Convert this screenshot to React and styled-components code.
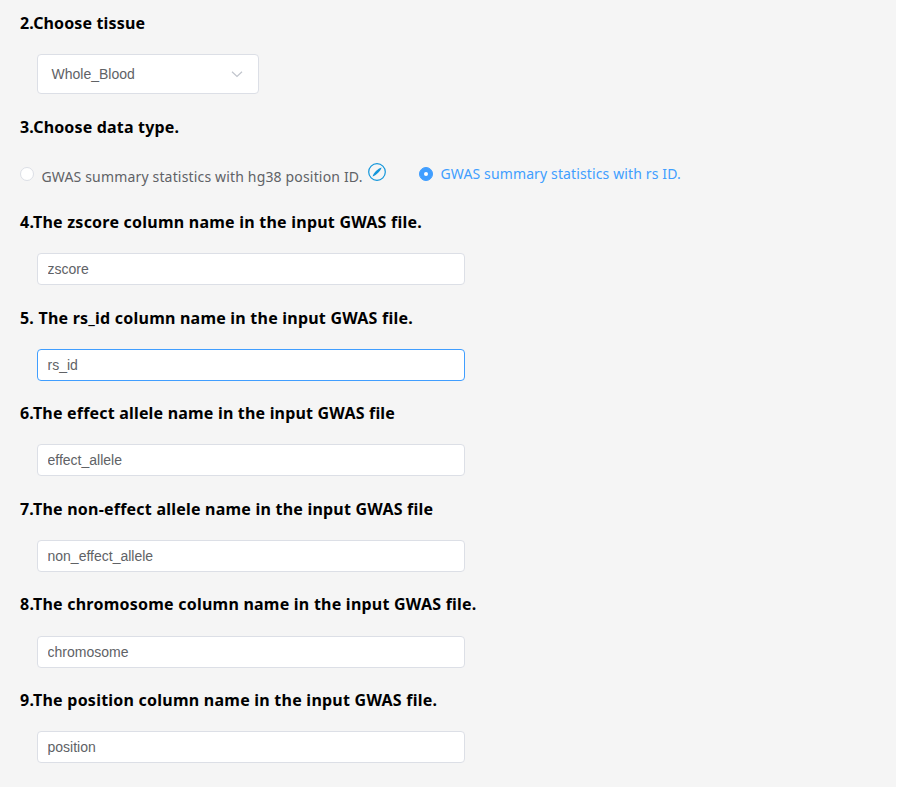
import React from "react";
import styled, { createGlobalStyle } from "styled-components";

const GlobalStyle = createGlobalStyle`
  * { box-sizing: border-box; }
  body { margin: 0; background: #fff; overflow: hidden; }
`;

const Page = styled.main`
  width: 896px;
  height: 787px;
  padding: 12px 20px 0;
  overflow: hidden;
  background: #f5f5f5;
  font-family: "Noto Sans", "Open Sans", sans-serif;
`;

const Section = styled.section`
  display: flex;
  flex-direction: column;
  height: ${(p) => p.$height}px;
`;

const Heading = styled.h3`
  margin: 0 0 ${(p) => p.$gap ?? 20.2}px;
  height: 22px;
  font-size: 16px;
  line-height: 22px;
  font-weight: 700;
  color: #000;
  white-space: nowrap;
  letter-spacing: ${(p) => p.$spacing ?? 0}px;
`;

const Select = styled.button`
  display: flex;
  align-items: center;
  justify-content: space-between;
  width: 222px;
  height: 40px;
  margin-left: 17px;
  padding: 0 14px 0 13.5px;
  border: 1px solid #dcdfe6;
  border-radius: 4px;
  background: #fff;
  color: #606266;
  font: 14px "Liberation Sans", Arial, sans-serif;
`;

const TextInput = styled.input`
  width: 428px;
  height: 32px;
  flex: none;
  margin-left: 17px;
  padding: 0 9.5px;
  border: 1px solid ${(p) => (p.$focused ? "#409eff" : "#dcdfe6")};
  border-radius: 4px;
  outline: none;
  background: #fff;
  color: #606266;
  font: 14px "Liberation Sans", Arial, sans-serif;
`;

const RadioRow = styled.div`
  display: flex;
  align-items: flex-start;
  height: 28px;
`;

const Radio = styled.label`
  display: flex;
  align-items: flex-start;
  color: ${(p) => (p.$checked ? "#409eff" : "#606266")};
`;

const Dot = styled.span`
  flex: none;
  display: flex;
  align-items: center;
  justify-content: center;
  width: 14px;
  height: 14px;
  margin-top: 5px;
  border: 1px solid ${(p) => (p.$checked ? "#409eff" : "#dcdfe6")};
  border-radius: 50%;
  background: ${(p) => (p.$checked ? "#409eff" : "#fff")};

  &::after {
    content: "";
    width: 4px;
    height: 4px;
    border-radius: 50%;
    background: #fff;
  }
`;

const RadioText = styled.span`
  width: ${(p) => p.$width}px;
  margin: ${(p) => p.$top}px 0 0 7.5px;
  font-size: 14px;
  line-height: 20px;
  white-space: nowrap;
  letter-spacing: ${(p) => p.$spacing}px;
`;

const CompassIcon = styled.svg`
  flex: none;
  width: 18px;
  height: 18px;
  margin: 1px 33px 0 0;
`;

const columns = [
  ["4.The zscore column name in the input GWAS file.", "zscore", 0.23],
  ["5. The rs_id column name in the input GWAS file.", "rs_id", 0.22],
  ["6.The effect allele name in the input GWAS file", "effect_allele", 0.19],
  ["7.The non-effect allele name in the input GWAS file", "non_effect_allele", 0.22],
  ["8.The chromosome column name in the input GWAS file.", "chromosome", 0.23],
  ["9.The position column name in the input GWAS file.", "position", 0.235],
];

export default function App() {
  return (
    <>
      <GlobalStyle />
      <Page>
        <Section $height={104}>
          <Heading $gap={20} $spacing={0.14}>2.Choose tissue</Heading>
          <Select type="button">
            Whole_Blood
            <svg width="14" height="14" viewBox="0 0 14 14" fill="none">
              <path d="M2 4.8 7 9.4l5-4.6" stroke="#c0c4cc" strokeWidth="1.2" />
            </svg>
          </Select>
        </Section>
        <Section $height={95}>
          <Heading $gap={24} $spacing={0.17}>3.Choose data type.</Heading>
          <RadioRow>
            <Radio>
              <Dot />
              <RadioText $top={5} $width={326.5} $spacing={0.165}>
                GWAS summary statistics with hg38 position ID.
              </RadioText>
              <CompassIcon viewBox="0 0 18 18">
                <circle cx="9" cy="9" r="8.3" fill="none" stroke="#1296db" strokeWidth="1.2" />
                <path
                  d="M13.6 4.4C13.4 6.2 10.8 9 9.6 10.2 8.2 11.6 6.2 13 4.6 13.4 5 11.8 6.6 9.4 8 8 9.4 6.6 12 4.6 13.6 4.4Z"
                  fill="#1296db"
                />
              </CompassIcon>
            </Radio>
            <Radio $checked>
              <Dot $checked />
              <RadioText $top={2} $spacing={0.13}>GWAS summary statistics with rs ID.</RadioText>
            </Radio>
          </RadioRow>
        </Section>
        {columns.map(([title, value, spacing], i) => (
          <Section key={value} $height={95.6}>
            <Heading $spacing={spacing}>{title}</Heading>
            <TextInput $focused={i === 1} defaultValue={value} aria-label={title} />
          </Section>
        ))}
      </Page>
    </>
  );
}
